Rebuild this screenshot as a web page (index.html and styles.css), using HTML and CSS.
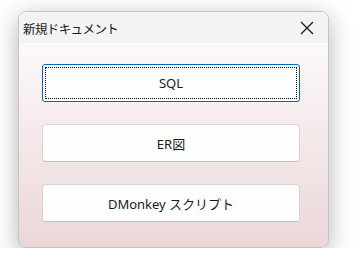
FILE: index.html
```html
<!DOCTYPE html>
<html lang="ja">

<head>
    <meta charset="UTF-8">
    <meta name="viewport" content="width=device-width, initial-scale=1.0">
    <title>新規ドキュメント</title>
    <link rel="stylesheet" href="styles.css">
</head>

<body>
    <div class="dialog">
        <div class="titlebar">
            <span class="title">新規ドキュメント</span>
            <button class="close" type="button" aria-label="閉じる">
                <svg width="14" height="14" viewBox="0 0 14 14">
                    <path d="M1 1 L13 13 M13 1 L1 13" stroke="#1a1a1a" stroke-width="1.3" fill="none" />
                </svg>
            </button>
        </div>
        <div class="choices">
            <button class="choice focused" type="button"><span>SQL</span></button>
            <button class="choice" type="button"><span>ER図</span></button>
            <button class="choice" type="button"><span>DMonkey スクリプト</span></button>
        </div>
    </div>
</body>

</html>
```

FILE: styles.css
```css
body {
    margin: 0;
    padding: 11px 0 0 18px;
    background: #fff;
    font-family: 'Noto Sans', 'Noto Sans CJK JP', sans-serif;
    color: #1a1a1a;
}

.dialog {
    width: 309px;
    height: 235px;
    border: 1px solid #c4c4c4;
    border-radius: 8px;
    overflow: hidden;
    box-shadow: 0 6px 24px rgba(0, 0, 0, 0.3);
    display: flex;
    flex-direction: column;
    background: linear-gradient(to bottom, #ffffff 0%, #f6eced 45%, #ebd6d8 100%);
}

.titlebar {
    height: 31px;
    flex: none;
    display: flex;
    align-items: center;
    justify-content: space-between;
    background: #f3f3f3;
    padding-left: 4px;
}

.title {
    font-family: 'Noto Sans CJK JP', sans-serif;
    font-size: 12.5px;
    letter-spacing: -0.6px;
    margin-top: 1px;
}

.close {
    width: 44px;
    height: 31px;
    border: none;
    background: none;
    padding: 0 0 0 2px;
    display: flex;
    align-items: center;
    justify-content: center;
}

.choices {
    display: flex;
    flex-direction: column;
    gap: 22px;
    padding: 21px 28px 0 23px;
}

.choice {
    height: 38px;
    border: 1px solid #d6d6d6;
    border-bottom-color: #c2c2c2;
    border-radius: 4px;
    background: #fdfdfd;
    font-family: 'Noto Sans', 'Noto Sans CJK JP', sans-serif;
    font-size: 13px;
    color: #1a1a1a;
    padding: 0;
    display: flex;
    align-items: center;
    justify-content: center;
}

.choice.focused {
    border: 1px solid #0067c0;
    border-radius: 3px;
    box-shadow: inset 0 0 0 1px #fff;
    position: relative;
}

.choice.focused::after {
    content: "";
    position: absolute;
    inset: 2px;
    border: 1px dotted #000;
}
```
